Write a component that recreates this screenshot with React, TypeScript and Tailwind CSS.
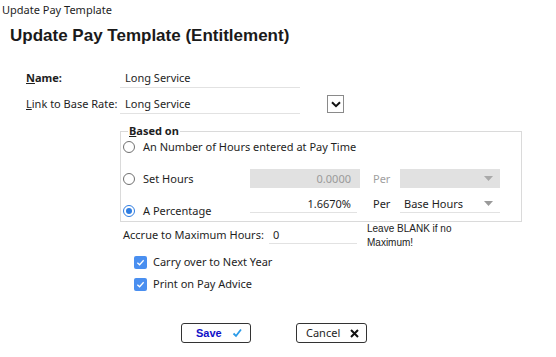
import React from "react";

function Radio({ checked }: { checked?: boolean }) {
  return (
    <span
      className={
        "flex h-[12px] w-[12px] shrink-0 items-center justify-center rounded-full border bg-white " +
        (checked ? "border-[#2f7de1]" : "border-[#707070]")
      }
    >
      {checked && <span className="h-[6px] w-[6px] rounded-full bg-[#2f7de1]" />}
    </span>
  );
}

function Checkbox() {
  return (
    <span className="flex h-[13px] w-[13px] shrink-0 items-center justify-center rounded-[2px] bg-[#4a8ff0]">
      <svg width="9" height="9" viewBox="0 0 10 10" fill="none">
        <path d="M1.5 5.2 L4 7.5 L8.5 2.5" stroke="#fff" strokeWidth="1.4" />
      </svg>
    </span>
  );
}

function Caret({ color }: { color: string }) {
  return (
    <svg width="9" height="5" viewBox="0 0 9 5">
      <path d="M0 0 H9 L4.5 5 Z" fill={color} />
    </svg>
  );
}

export default function App() {
  return (
    <div className="h-[357px] w-[556px] overflow-hidden bg-white font-['Noto_Sans','DejaVu_Sans',sans-serif] text-[11px] leading-[14px] text-[#1e1e1e]">
      <div className="pl-[2px] pt-[3px] leading-[14px]">Update Pay Template</div>

      <h1 className="ml-[10px] mt-[9px] font-['Liberation_Sans',Arial,sans-serif] text-[17px] font-bold leading-[20px] text-[#1a1a1a]">
        Update Pay Template (Entitlement)
      </h1>

      {/* Name */}
      <div className="mt-[22px] flex h-[20px] items-center">
        <div className="w-[120px] pl-[26px] font-bold">
          <span className="underline">N</span>ame:
        </div>
        <div className="flex h-[20px] w-[180px] items-center border-b border-[#e2e2e2] pl-[5px]">Long Service</div>
      </div>

      {/* Link to Base Rate */}
      <div className="mt-[6px] flex h-[20px] items-center">
        <div className="w-[120px] pl-[26px]">
          <span className="underline">L</span>ink to Base Rate:
        </div>
        <div className="flex h-[20px] w-[180px] items-center border-b border-[#e2e2e2] pl-[5px]">Long Service</div>
        <div className="ml-[27px] flex h-[18px] w-[17px] items-center justify-center border border-[#8a8a8a] bg-white">
          <svg width="10" height="7" viewBox="0 0 10 7" fill="none">
            <path d="M1 1.2 L5 5.2 L9 1.2" stroke="#111" strokeWidth="2" />
          </svg>
        </div>
      </div>

      {/* Based on */}
      <fieldset className="ml-[120px] mt-[10px] w-[402px] border border-[#dadada] pb-0 pl-[2px]">
        <legend className="ml-[5px] px-[1px] font-bold leading-[14px]">
          <span className="underline">B</span>ased on
        </legend>
        <div className="flex h-[18px] items-center gap-[8px]">
          <Radio />
          <span>An Number of Hours entered at Pay Time</span>
        </div>
        <div className="mt-[13px] flex h-[19px] items-center">
          <div className="flex w-[127px] items-center gap-[8px]">
            <Radio />
            <span>Set Hours</span>
          </div>
          <div className="flex h-[19px] w-[110px] items-center justify-end bg-[#e1e1e1] pr-[9px] text-[#9a9a9a]">0.0000</div>
          <div className="ml-[13px] w-[27px] text-[#a0a0a0]">Per</div>
          <div className="flex h-[19px] w-[100px] items-center justify-end bg-[#e1e1e1] pr-[7px]">
            <Caret color="#a9a9a9" />
          </div>
        </div>
        <div className="mt-[7px] flex h-[26px] items-start">
          <div className="mt-[9px] flex w-[127px] items-center gap-[8px]">
            <Radio checked />
            <span>A Percentage</span>
          </div>
          <div className="flex h-[18px] w-[107px] items-center justify-end border-b border-[#e2e2e2] pr-[6px]">1.6670%</div>
          <div className="ml-[16px] flex h-[18px] w-[27px] items-center">Per</div>
          <div className="flex h-[18px] w-[100px] items-center justify-between border-b border-[#e2e2e2] pl-[4px] pr-[7px]">
            <span>Base Hours</span>
            <Caret color="#9a9a9a" />
          </div>
        </div>
      </fieldset>

      {/* Accrue */}
      <div className="ml-[123px] flex items-start">
        <div className="mt-[6px] w-[146px]">Accrue to Maximum Hours:</div>
        <div className="mt-[6px] flex h-[16px] w-[88px] items-start border-b border-[#e2e2e2] pl-[4px]">0</div>
        <div className="ml-[10px] font-['Liberation_Sans',Arial,sans-serif] text-[10px] leading-[14px] text-[#222]">
          Leave BLANK if no
          <br />
          Maximum!
        </div>
      </div>

      {/* Checkboxes */}
      <div className="ml-[134px] mt-[5px] flex flex-col gap-[8px]">
        <div className="flex h-[14px] items-center gap-[6px]">
          <Checkbox />
          <span>Carry over to Next Year</span>
        </div>
        <div className="flex h-[14px] items-center gap-[6px]">
          <Checkbox />
          <span>Print on Pay Advice</span>
        </div>
      </div>

      {/* Buttons */}
      <div className="ml-[181px] mt-[32px] flex gap-[45px]">
        <button className="flex h-[20px] w-[70px] items-center rounded-[3px] border border-[#333] bg-white pl-[14px] pr-[8px]">
          <span className="font-['Liberation_Sans',Arial,sans-serif] text-[11px] font-bold text-[#1010c8]">Save</span>
          <svg className="ml-auto" width="10" height="10" viewBox="0 0 10 10" fill="none">
            <path d="M1.5 5.5 L4 8 L9 1.5" stroke="#2b9be8" strokeWidth="1.8" />
          </svg>
        </button>
        <button className="flex h-[20px] w-[71px] items-center rounded-[3px] border border-[#333] bg-white pl-[9px] pr-[7px]">
          <span>Cancel</span>
          <svg className="ml-auto" width="9" height="9" viewBox="0 0 9 9" fill="none">
            <path d="M1 1 L8 8 M8 1 L1 8" stroke="#111" strokeWidth="2" />
          </svg>
        </button>
      </div>
    </div>
  );
}
